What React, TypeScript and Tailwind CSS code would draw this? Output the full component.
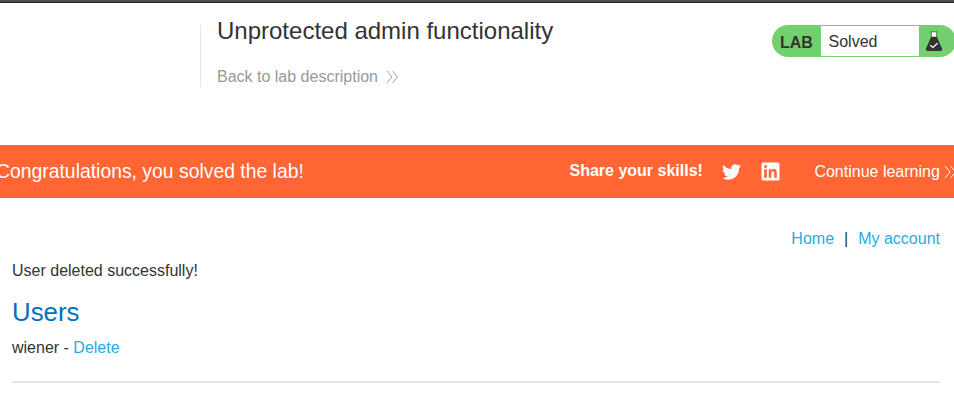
import React from "react";

function Chevrons({ className }: { className: string }) {
  return (
    <svg className={className} width="13" height="14" viewBox="0 0 13 14" fill="none" stroke="currentColor" strokeWidth="0.9">
      <path d="M1 1l5 6-5 6M6.5 1l5 6-5 6" />
    </svg>
  );
}

function Flask() {
  return (
    <svg width="18" height="21" viewBox="0 0 18 21">
      <path d="M6.500 1h5v6h-5z" fill="#fff" />
      <path d="M5.400 0.800h7.200" stroke="#6b6f6b" strokeWidth="1" />
      <path d="M6.400 1v5.500M11.600 1v5.500" stroke="#4a5a49" strokeWidth="0.700" />
      <path d="M6.200 5.700h5.600L17 17.600c.5 1.300-.2 2.400-1.600 2.400H2.600C1.200 20 .5 18.900 1 17.600z" fill="#333332" />
      <path d="M5.200 14.200l2.700 2.300 4.600-4.200" fill="none" stroke="#fff" strokeWidth="1.300" />
    </svg>
  );
}

function LabStatus() {
  return (
    <div className="mt-[22px] flex h-8 w-[184px] shrink-0 items-center rounded-full bg-[#72d16e] text-base">
      <b className="w-[49px] pt-[3px] pl-2 leading-6">LAB</b>
      <span className="h-[30px] w-[98px] bg-white pt-px pl-[7.500px] leading-[30px]">Solved</span>
      <span className="ml-[6px]">
        <Flask />
      </span>
    </div>
  );
}

function Twitter() {
  return (
    <svg width="19" height="20" viewBox="0 0 24 24" fill="#fff">
      <path d="M23.953 4.570a10 10 0 01-2.825.775 4.958 4.958 0 002.163-2.723c-.951.555-2.005.959-3.127 1.184a4.920 4.920 0 00-8.384 4.482C7.690 8.095 4.067 6.130 1.640 3.162a4.822 4.822 0 00-.666 2.475c0 1.710.870 3.213 2.188 4.096a4.904 4.904 0 01-2.228-.616v.060a4.923 4.923 0 003.946 4.827 4.996 4.996 0 01-2.212.085 4.936 4.936 0 004.604 3.417 9.867 9.867 0 01-6.102 2.105c-.390 0-.779-.023-1.170-.067a13.995 13.995 0 007.557 2.209c9.053 0 13.998-7.496 13.998-13.985 0-.210 0-.420-.015-.630A9.935 9.935 0 0024 4.590z" />
    </svg>
  );
}

function LinkedIn() {
  return (
    <svg width="19" height="19" viewBox="0 0 19 19">
      <rect x="0.500" y="0.500" width="18" height="18" rx="1.500" fill="#fff" />
      <path d="M3.200 7.200h2.700v8.600H3.200zM7.700 7.200h2.500v1.200c.5-.9 1.400-1.400 2.600-1.400 2.500 0 3 1.600 3 3.900v4.900h-2.600v-4.300c0-1.200-.1-2.300-1.400-2.300s-1.500 1.100-1.500 2.200v4.400H7.700z" fill="#ff6633" />
      <circle cx="4.550" cy="4.500" r="1.500" fill="#ff6633" />
    </svg>
  );
}

export default function App() {
  return (
    <div className="h-[402px] w-[954px] overflow-hidden bg-white font-['Liberation_Sans',Arial,sans-serif] text-base whitespace-nowrap text-[#333332]">
      <div className="h-[3px] border-b border-[#222222] bg-[#4d4b4c]" />
      <header className="flex h-[142px] items-start pl-[200px]">
        <div className="mt-[22px] h-[62px] w-px shrink-0 bg-[#e5e5e5]" />
        <div className="w-[571px] shrink-0 pt-3 pl-4">
          <h2 className="text-2xl leading-8">Unprotected admin functionality</h2>
          <a className="mt-[18px] flex items-center leading-6 text-[#999999]">
            Back to lab description
            <Chevrons className="mb-px ml-[8px]" />
          </a>
        </div>
        <LabStatus />
      </header>

      <section className="flex h-[53px] items-center bg-[#ff6633] text-white">
        <h4 className="-ml-[4px] w-[573.500px] shrink-0 pb-[2px] text-[19.360px] leading-6">Congratulations, you solved the lab!</h4>
        <b className="w-[152.500px] shrink-0 pb-[2px] leading-6">Share your skills!</b>
        <span className="w-[39px] shrink-0">
          <Twitter />
        </span>
        <span className="w-[53.400px] shrink-0">
          <LinkedIn />
        </span>
        <a className="flex shrink-0 items-center leading-6">
          Continue learning
          <Chevrons className="ml-[4.500px] shrink-0" />
        </a>
      </section>

      <main className="px-3">
        <nav className="flex justify-end gap-[10px] pt-[29px] pr-[2px] leading-6">
          <a className="text-[#29abe2]">Home</a>
          <span>|</span>
          <a className="text-[#29abe2]">My account</a>
        </nav>
        <p className="mt-2 leading-6">User deleted successfully!</p>
        <h1 className="mt-[13px] text-[25.800px] leading-8 text-[#0071bc]">Users</h1>
        <div className="mt-[8px] leading-6">
          wiener - <a className="text-[#29abe2]">Delete</a>
        </div>
        <hr className="mt-[21px] mr-[2px] border-t-2 border-[#e5e5e5]" />
      </main>
    </div>
  );
}
